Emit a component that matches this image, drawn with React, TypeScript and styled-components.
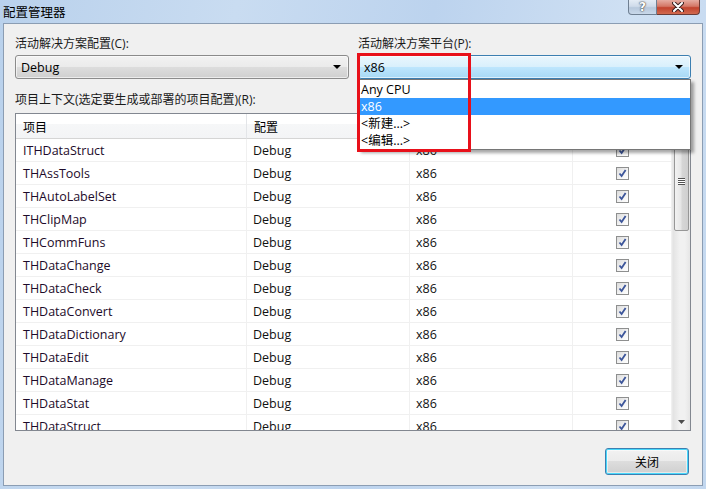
import styled, { createGlobalStyle } from 'styled-components';

const projects = [
  'ITHDataStruct',
  'THAssTools',
  'THAutoLabelSet',
  'THClipMap',
  'THCommFuns',
  'THDataChange',
  'THDataCheck',
  'THDataConvert',
  'THDataDictionary',
  'THDataEdit',
  'THDataManage',
  'THDataStat',
  'THDataStruct',
];

const platforms = [
  { name: 'Any CPU', selected: false },
  { name: 'x86', selected: true },
  { name: '<新建...>', selected: false },
  { name: '<编辑...>', selected: false },
];

const Check = () => (
  <CheckBox>
    <svg width="9" height="9" viewBox="0 0 9 9">
      <path d="M1.5 4.5 L3.6 7 L7.6 1" fill="none" stroke="#3c559a" strokeWidth="1.8" />
    </svg>
  </CheckBox>
);

const App = () => {
  return (
    <>
      <GlobalStyle />
      <Window>
        <TitleBar>
          <TitleText>配置管理器</TitleText>
          <CaptionButtons>
            <CaptionButton $kind="help">?</CaptionButton>
            <CaptionButton $kind="close">
              <svg width="12" height="10" viewBox="0 0 12 10">
                <path d="M2 1 L10 9 M10 1 L2 9" stroke="#3a2020" strokeWidth="4" strokeLinecap="round" />
                <path d="M2 1 L10 9 M10 1 L2 9" stroke="#fff" strokeWidth="2" strokeLinecap="round" />
              </svg>
            </CaptionButton>
          </CaptionButtons>
        </TitleBar>

        <Client>
          <TopRow>
            <Field>
              <Label>活动解决方案配置(C):</Label>
              <Combo>
                <span>Debug</span>
                <Arrow />
              </Combo>
            </Field>
            <Field>
              <Label>活动解决方案平台(P):</Label>
              <Combo $active>
                <span>x86</span>
                <Arrow />
              </Combo>
              <DropList>
                {platforms.map(p => (
                  <DropItem key={p.name} $selected={p.selected}>{p.name}</DropItem>
                ))}
              </DropList>
              <Highlight />
            </Field>
          </TopRow>

          <Label $gap>项目上下文(选定要生成或部署的项目配置)(R):</Label>

          <Table>
            <Grid>
              <HeaderCell>项目</HeaderCell>
              <HeaderCell>配置</HeaderCell>
              <HeaderCell>平台</HeaderCell>
              <HeaderCell $center>生成</HeaderCell>
              {projects.map(name => (
                <Row key={name}>
                  <Cell $first>{name}</Cell>
                  <Cell>Debug</Cell>
                  <Cell>x86</Cell>
                  <Cell $center>
                    <Check />
                  </Cell>
                </Row>
              ))}
            </Grid>
            <ScrollBar>
              <ScrollArrow />
              <ScrollThumb>
                <Grip />
              </ScrollThumb>
              <ScrollTrack />
              <ScrollArrow $down>
                <svg width="7" height="4" viewBox="0 0 7 4">
                  <path d="M0 0 H7 L3.5 4 Z" fill="#4d4d4d" />
                </svg>
              </ScrollArrow>
            </ScrollBar>
          </Table>

          <Footer>
            <Button>关闭</Button>
          </Footer>
        </Client>
      </Window>
    </>
  );
};

const GlobalStyle = createGlobalStyle`
  body {
    margin: 0;
    font-family: "Open Sans", "Noto Sans CJK SC", sans-serif;
    font-size: 12px;
    color: #111;
  }
`;

const Window = styled.div`
  width: 706px;
  height: 489px;
  display: flex;
  flex-direction: column;
  background: linear-gradient(100deg, #b9d1ec 0%, #c9dcf1 30%, #bcd3ee 55%, #cfe0f3 80%, #c2d7ef 100%);
  overflow: hidden;
`;

const TitleBar = styled.div`
  height: 23px;
  display: flex;
  align-items: flex-start;
  padding-left: 3px;
`;

const TitleText = styled.div`
  font-family: "Noto Sans CJK SC", sans-serif;
  font-size: 12.5px;
  line-height: 24px;
  color: #000;
`;

const CaptionButtons = styled.div`
  margin-left: auto;
  margin-right: 6px;
  display: flex;
`;

const CaptionButton = styled.div<{ $kind: 'help' | 'close' }>`
  width: ${p => (p.$kind === 'close' ? '43px' : '29px')};
  height: 15px;
  display: flex;
  align-items: center;
  justify-content: center;
  box-sizing: border-box;
  border: 1px solid ${p => (p.$kind === 'close' ? '#6b3b36' : '#6f7f92')};
  border-top: none;
  border-radius: ${p => (p.$kind === 'close' ? '0 0 4px 0' : '0 0 0 4px')};
  border-left: ${p => (p.$kind === 'close' ? 'none' : undefined)};
  background: ${p =>
    p.$kind === 'close'
      ? 'linear-gradient(#e6ada2 0%, #d47766 45%, #c2432e 55%, #d16a4f 100%)'
      : 'linear-gradient(#e4ecf5 0%, #cfdbea 45%, #b7c8dc 55%, #c9d8ea 100%)'};
  color: #fff;
  font-family: "DejaVu Sans", sans-serif;
  font-weight: bold;
  font-size: 12px;
  text-shadow: 0 0 2px #333, 0 0 1px #333;
`;

const Client = styled.div`
  flex: 1;
  margin: 0 3px 3px 3px;
  border: 1px solid #8b9db3;
  background: #f0f0f0;
  padding: 13px 11px 0 11px;
  display: flex;
  flex-direction: column;
`;

const TopRow = styled.div`
  display: grid;
  grid-template-columns: 334px 333px;
  gap: 9px;
`;

const Field = styled.div`
  position: relative;
  display: flex;
  flex-direction: column;
`;

const Label = styled.div<{ $gap?: boolean }>`
  height: 14px;
  line-height: 14px;
  margin-top: ${p => (p.$gap ? '14px' : '0')};
  margin-bottom: ${p => (p.$gap ? '6px' : '4px')};
  white-space: nowrap;
  color: #1a1a1a;
`;

const Combo = styled.div<{ $active?: boolean }>`
  height: 24px;
  box-sizing: border-box;
  border: 1px solid ${p => (p.$active ? '#3c7fb1' : '#8b8b8b')};
  border-radius: 3px;
  display: flex;
  align-items: center;
  justify-content: space-between;
  padding: 0 7px 0 5px;
  font-size: 12.5px;
  color: #000;
  background: ${p =>
    p.$active
      ? 'linear-gradient(#eaf6fd 0%, #d9f0fc 48%, #bee6fd 50%, #a7d9f5 100%)'
      : 'linear-gradient(#f2f2f2 0%, #ebebeb 48%, #dddddd 50%, #cfcfcf 100%)'};
  box-shadow: inset 0 0 0 1px rgba(255, 255, 255, 0.6);
`;

const Arrow = styled.div`
  width: 0;
  height: 0;
  border-left: 4px solid transparent;
  border-right: 4px solid transparent;
  border-top: 4px solid #000;
`;

const DropList = styled.div`
  position: absolute;
  top: 42px;
  left: 0;
  width: 333px;
  box-sizing: border-box;
  background: #fff;
  border: 1px solid #767676;
  box-shadow: 3px 3px 3px rgba(0, 0, 0, 0.35);
  padding-top: 1px;
  z-index: 2;
`;

const DropItem = styled.div<{ $selected?: boolean }>`
  height: 17px;
  line-height: 17px;
  padding-left: 2px;
  font-size: 12.5px;
  background: ${p => (p.$selected ? '#3399ff' : 'transparent')};
  color: ${p => (p.$selected ? '#fff' : '#000')};
`;

const Highlight = styled.div`
  position: absolute;
  left: -1px;
  top: 16px;
  width: 114px;
  height: 99px;
  box-sizing: border-box;
  border: 3px solid #e8101a;
  z-index: 3;
`;

const Table = styled.div`
  height: 318px;
  box-sizing: border-box;
  border: 1px solid #828790;
  background: #fff;
  display: flex;
  overflow: hidden;
`;

const Grid = styled.div`
  flex: 1;
  display: grid;
  grid-template-columns: 231px 163px 163px 1fr;
  grid-template-rows: 25px;
  grid-auto-rows: 23px;
  align-content: start;
  overflow: hidden;
`;

const HeaderCell = styled.div<{ $center?: boolean }>`
  box-sizing: border-box;
  display: flex;
  align-items: center;
  justify-content: ${p => (p.$center ? 'center' : 'flex-start')};
  padding-left: ${p => (p.$center ? '0' : '7px')};
  border-right: 1px solid #e3e5e8;
  border-bottom: 1px solid #d5d5d5;
  background: linear-gradient(#ffffff 0%, #ffffff 40%, #f6f7f8 41%, #f3f4f6 100%);
  font-family: "Noto Sans CJK SC", sans-serif;
  color: #000;
`;

const Row = styled.div`
  display: contents;
`;

const Cell = styled.div<{ $first?: boolean; $center?: boolean }>`
  box-sizing: border-box;
  display: flex;
  align-items: center;
  justify-content: ${p => (p.$center ? 'center' : 'flex-start')};
  padding-left: ${p => (p.$center ? '0' : p.$first ? '7px' : '6px')};
  border-right: 1px solid #f0f0f0;
  border-bottom: 1px solid #f0f0f0;
  font-size: 12.5px;
  color: ${p => (p.$first ? '#1d0b2a' : '#111')};
  white-space: nowrap;
`;

const CheckBox = styled.div`
  width: 13px;
  height: 13px;
  box-sizing: border-box;
  border: 1px solid #8e8f8f;
  background: linear-gradient(135deg, #dcdcdc 0%, #f4f4f4 60%, #ffffff 100%);
  display: flex;
  align-items: center;
  justify-content: center;
  margin-left: 1px;
`;

const ScrollBar = styled.div`
  width: 17px;
  display: flex;
  flex-direction: column;
  background: linear-gradient(to right, #e3e3e3, #f1f1f1 40%, #f1f1f1 70%, #e6e6e6);
  border-left: 1px solid #e8e8e8;
`;

const ScrollArrow = styled.div<{ $down?: boolean }>`
  height: 17px;
  display: flex;
  align-items: center;
  justify-content: center;
`;

const ScrollThumb = styled.div`
  height: 100px;
  box-sizing: border-box;
  margin: 0 1px;
  border: 1px solid #979797;
  border-radius: 2px;
  background: linear-gradient(to right, #f2f2f2, #e6e6e6 45%, #d6d6d6 55%, #cfcfcf);
  display: flex;
  align-items: center;
  justify-content: center;
`;

const Grip = styled.div`
  width: 7px;
  height: 7px;
  background: repeating-linear-gradient(#525252 0 1px, #ffffff 1px 2px);
`;

const ScrollTrack = styled.div`
  flex: 1;
`;

const Footer = styled.div`
  display: flex;
  justify-content: flex-end;
  padding-right: 2px;
  margin-top: 17px;
`;

const Button = styled.div`
  width: 84px;
  height: 27px;
  box-sizing: border-box;
  border: 1px solid #3c7fb1;
  border-radius: 3px;
  display: flex;
  align-items: center;
  justify-content: center;
  font-family: "Noto Sans CJK SC", sans-serif;
  color: #000;
  background: linear-gradient(#f2f2f2 0%, #ebebeb 48%, #dddddd 50%, #cfcfcf 100%);
  box-shadow: inset 0 0 0 1px #48d8fb, inset 0 0 0 2px rgba(255, 255, 255, 0.5);
`;

export default App;
